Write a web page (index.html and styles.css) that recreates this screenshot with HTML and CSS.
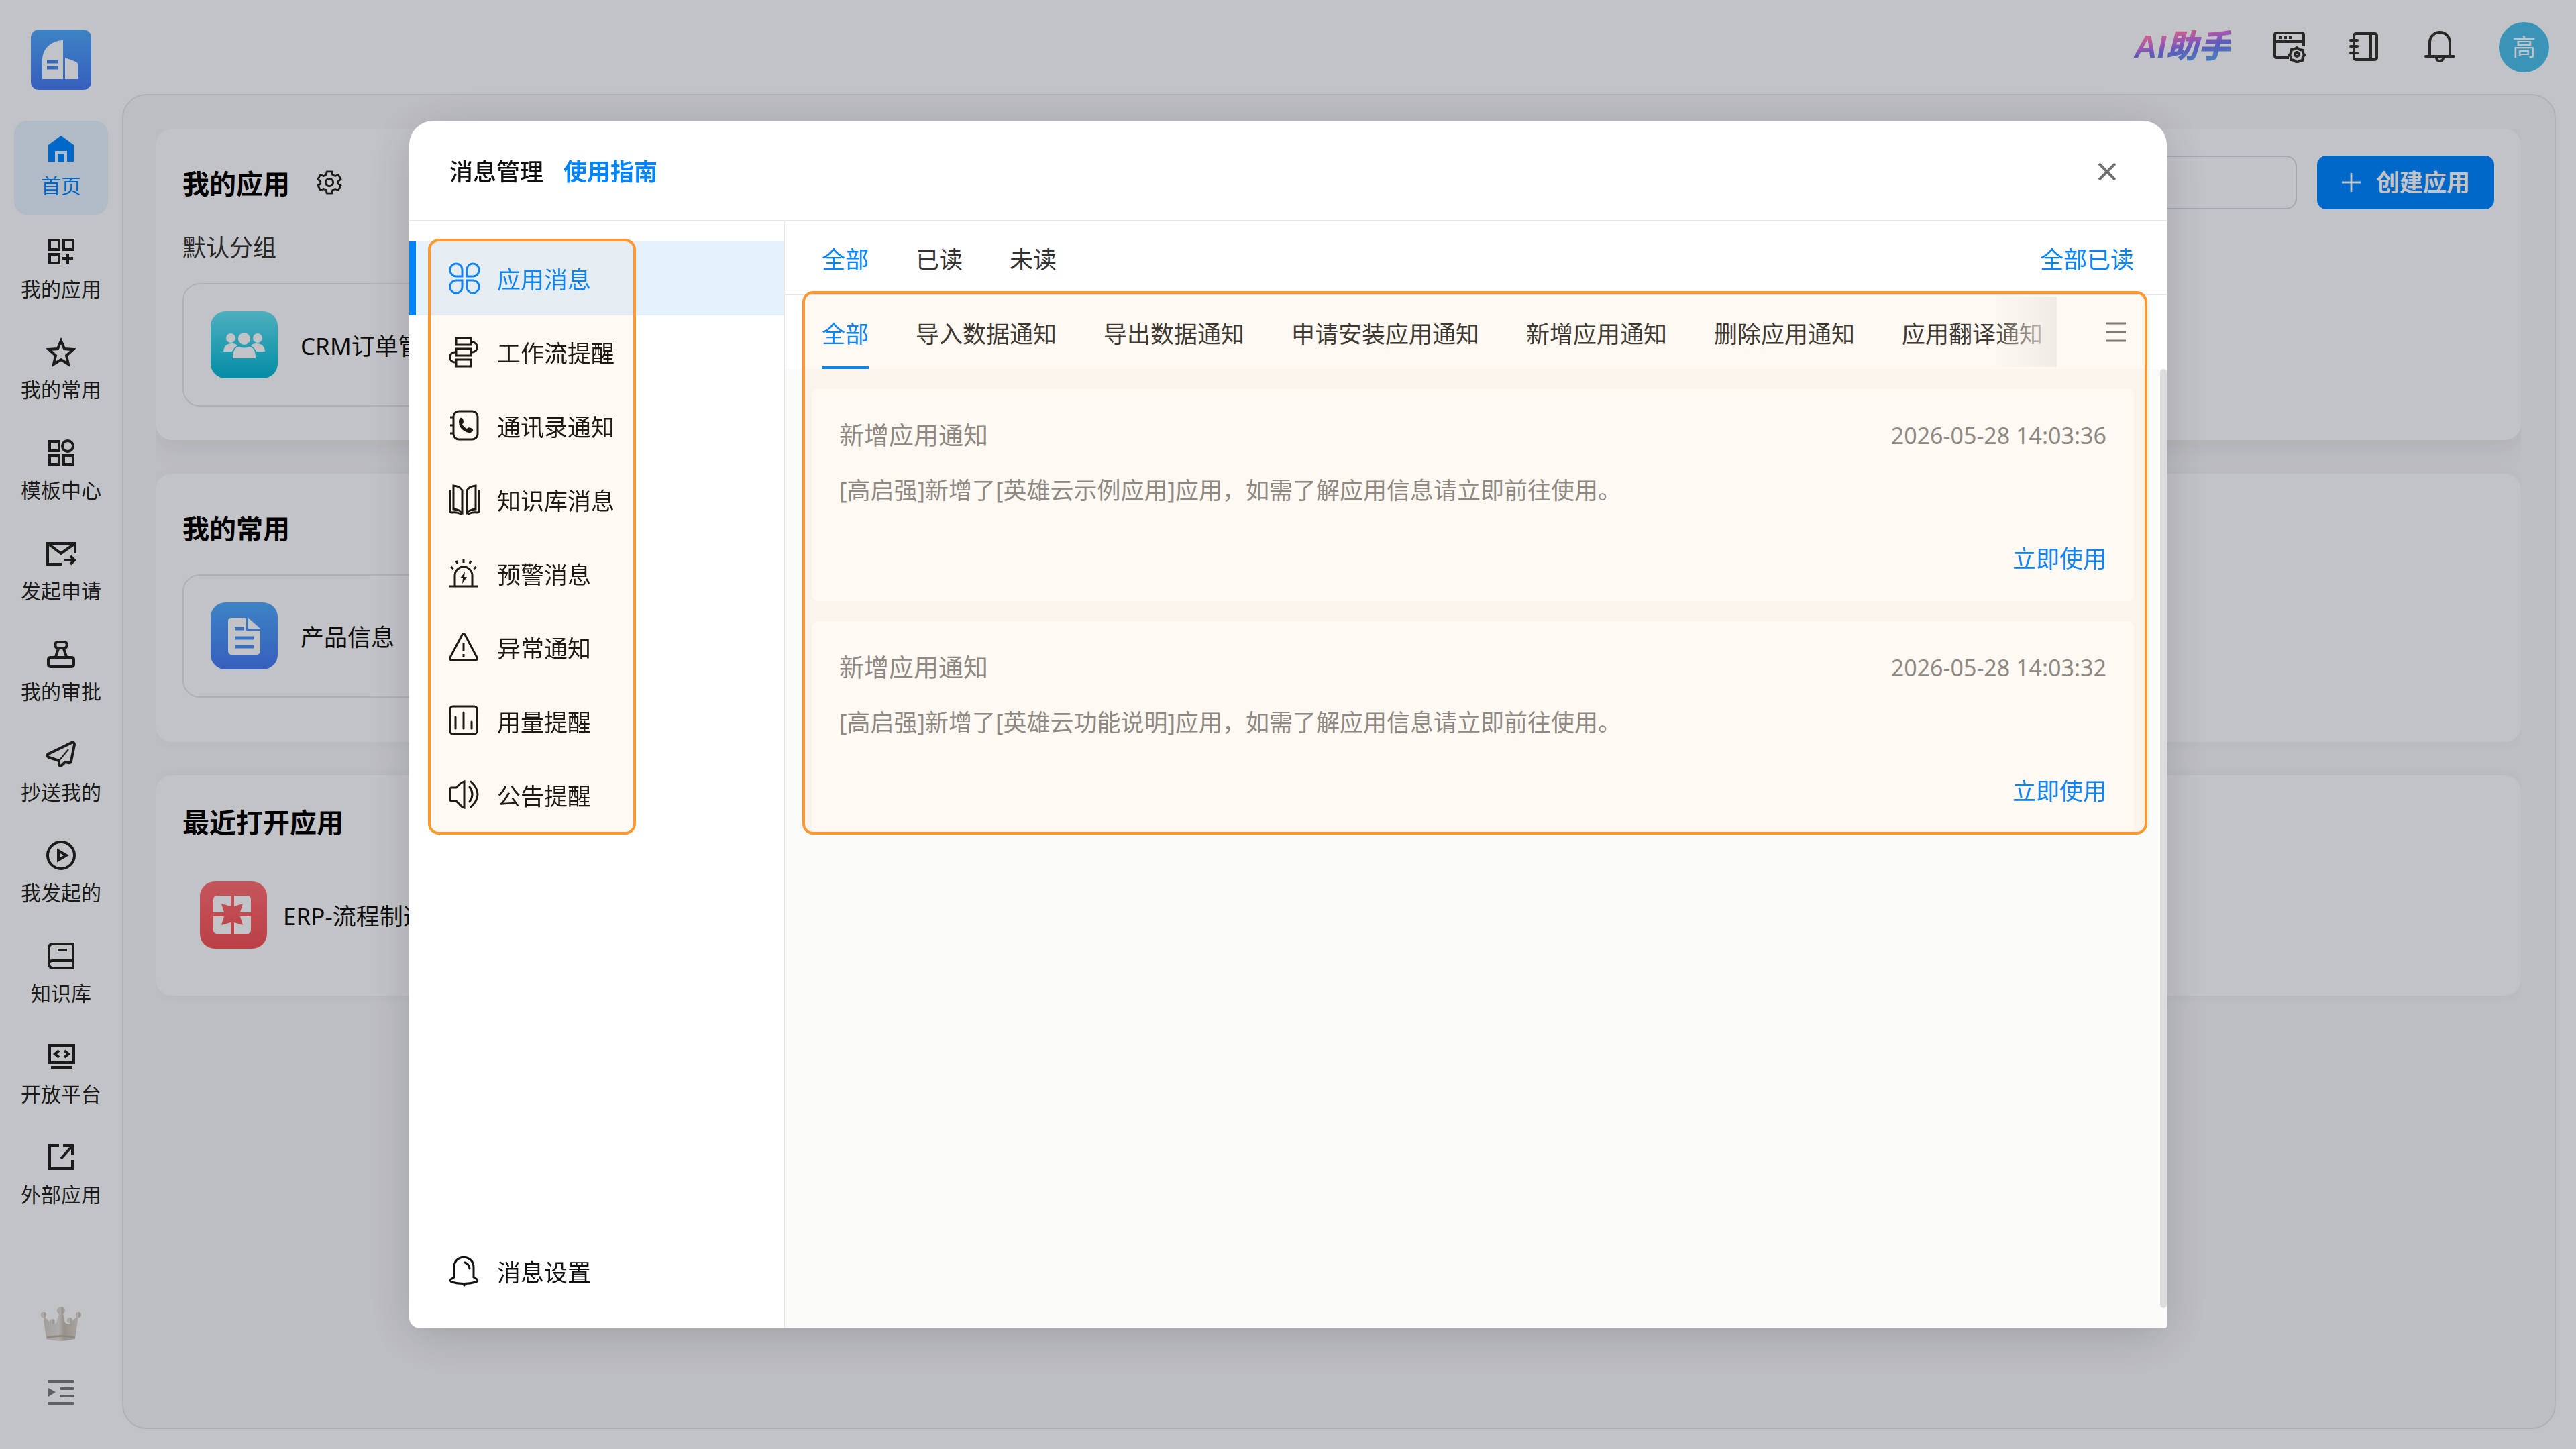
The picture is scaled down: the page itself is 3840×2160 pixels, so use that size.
FILE: index.html
```html
<!DOCTYPE html>
<html lang="zh-CN">
<head>
    <meta charset="UTF-8">
    <meta name="viewport" content="width=device-width, initial-scale=1.0">
    <title>消息管理</title>
    <link rel="stylesheet" href="styles.css">
</head>
<body>
    <div class="app">
        <aside class="sidebar">
            <a href="#" class="logo" aria-label="首页">
                <svg viewBox="0 0 90 90">
                    <defs>
                        <linearGradient id="blueGrad" x1="0" y1="0" x2="0" y2="1">
                            <stop offset="0" stop-color="#4ca4f6"/>
                            <stop offset="1" stop-color="#4577ec"/>
                        </linearGradient>
                    </defs>
                    <rect width="90" height="90" rx="12" fill="url(#blueGrad)"/>
                    <path d="M17 74V46C17 28 30 17 48 16v58z" fill="#f3f4f9"/>
                    <path d="M51 74V42l16 6q3 1 3 4v22z" fill="#f3f4f9"/>
                    <path d="M24 48h17M24 57h17" stroke="#4583ef" stroke-width="5"/>
                </svg>
            </a>
            <nav class="nav">
                <a href="#" class="nav-item active">
                    <svg class="icon" viewBox="0 0 48 48"><path d="M24 1L43 15v25H33V24H15v16H5V15z" fill="currentColor" stroke="none"/><path d="M19 28h10v12H19z" fill="currentColor" stroke="none"/></svg>
                    <span>首页</span>
                </a>
                <a href="#" class="nav-item">
                    <svg class="icon" viewBox="0 0 48 48"><path d="M7 7h14v14H7zM28 7h14v14H28zM7 28h14v13H7zM34 27v15M26 34h16"/></svg>
                    <span>我的应用</span>
                </a>
                <a href="#" class="nav-item">
                    <svg class="icon" viewBox="0 0 48 48"><path d="M24 7l5 12 13 1-10 9 3 13-11-7-11 7 3-13-10-9 13-1z"/></svg>
                    <span>我的常用</span>
                </a>
                <a href="#" class="nav-item">
                    <svg class="icon" viewBox="0 0 48 48"><path d="M7 7h14v14H7zM7 28h14v13H7zM28 28h14v13H28z"/><circle cx="34" cy="14" r="8"/></svg>
                    <span>模板中心</span>
                </a>
                <a href="#" class="nav-item">
                    <svg class="icon" viewBox="0 0 48 48"><path d="M25 40H4V9h41v15M4 9l20 15L45 9M29 34h15M38 28l6 6-6 6"/></svg>
                    <span>发起申请</span>
                </a>
                <a href="#" class="nav-item">
                    <svg class="icon" viewBox="0 0 48 48"><rect x="5" y="29" width="38" height="14" rx="3"/><path d="M16 28l4-12M32 28l-4-12M18 15a5 5 0 0 1 0-9h12a5 5 0 0 1 0 9z"/></svg>
                    <span>我的审批</span>
                </a>
                <a href="#" class="nav-item">
                    <svg class="icon" viewBox="0 0 48 48"><path d="M4 24q-1 3 2 4l15 5v5q1 5 5 1l4-4 5 1q3 1 4-2l5-25q0-4-4-3L7 22q-3 1-3 2z"/><path d="M21 33l14-17" stroke-width="2"/></svg>
                    <span>抄送我的</span>
                </a>
                <a href="#" class="nav-item">
                    <svg class="icon" viewBox="0 0 48 48"><circle cx="24" cy="24" r="20"/><path d="M20 17v14l12-7z"/></svg>
                    <span>我发起的</span>
                </a>
                <a href="#" class="nav-item">
                    <svg class="icon" viewBox="0 0 48 48"><path d="M42 31H11q-5 0-5 5t5 6h31V6H12q-6 0-6 6v24M19 15h14"/></svg>
                    <span>知识库</span>
                </a>
                <a href="#" class="nav-item">
                    <svg class="icon" viewBox="0 0 48 48"><path d="M7 7h36v26H7zM9 40h32M21 15l-6 5 6 5M29 15l6 5-6 5"/></svg>
                    <span>开放平台</span>
                </a>
                <a href="#" class="nav-item">
                    <svg class="icon" viewBox="0 0 48 48"><path d="M21 7H7v34h34V28M27 7h14v14M41 7L24 26"/></svg>
                    <span>外部应用</span>
                </a>
            </nav>
            <div class="sidebar-foot">
                <button class="icon-btn crown" aria-label="会员">
                    <svg viewBox="0 0 62 56">
                        <defs>
                            <linearGradient id="crownGrad" x1="0" y1="0" x2="1" y2="0">
                                <stop offset="0" stop-color="#cbc5c0"/>
                                <stop offset="0.45" stop-color="#d9d7d6"/>
                                <stop offset="0.6" stop-color="#bfb6ae"/>
                                <stop offset="1" stop-color="#d2cdc8"/>
                            </linearGradient>
                        </defs>
                        <g fill="url(#crownGrad)">
                            <path d="M4 14l14 14 6-2 5-18h4l4 18 6 2 14-14-5 36q-22 6-43 0z"/>
                            <circle cx="5" cy="14" r="4"/>
                            <circle cx="31" cy="8" r="6"/>
                            <circle cx="57" cy="14" r="4"/>
                            <circle cx="18" cy="24" r="4"/>
                            <circle cx="44" cy="22" r="4"/>
                        </g>
                        <path d="M10 48q21-5 42 0" fill="none" stroke="#b3aaa3" stroke-width="3"/>
                    </svg>
                </button>
                <button class="icon-btn collapse" aria-label="收起菜单">
                    <svg class="icon" viewBox="0 0 48 48"><path d="M6 7h36M24 18h18M24 29h18M6 40h36" stroke-linecap="round"/><path d="M5 17l11 6-11 7z" fill="currentColor" stroke="none"/></svg>
                </button>
            </div>
        </aside>

        <div class="main">
            <header class="topbar">
                <a href="#" class="ai">AI助手</a>
                <button class="icon-btn" aria-label="工作台设置">
                    <svg class="icon" viewBox="0 0 48 48"><path d="M23 40H5q-3 0-3-3V6q0-3 3-3h37q3 0 3 3v17M2 16h43"/><path d="M8 10h4M16 10h4M23 10h4"/><path d="M35 25l4 3 5 1v4l2 3-2 3-1 5-4 1-4 2-4-3-5-1v-4l-2-3 2-3 1-5 5-1z"/><circle cx="35" cy="35" r="3"/></svg>
                </button>
                <button class="icon-btn" aria-label="通讯录">
                    <svg class="icon" viewBox="0 0 48 48"><rect x="8" y="4" width="34" height="39" rx="3"/><path d="M33 4v39"/><path d="M3 14h10M3 23h10M3 33h10" stroke-linecap="round"/></svg>
                </button>
                <button class="icon-btn" aria-label="消息">
                    <svg class="icon" viewBox="0 0 48 48"><path d="M3 38h42M9 38V17a15 15 0 0 1 30 0v21M19 40a5 5 0 0 0 10 0" stroke-linecap="round"/></svg>
                </button>
                <button class="avatar">高</button>
            </header>

            <main class="panel">
                <div class="panel-body">
                    <section class="card card-apps">
                        <div class="card-head">
                            <h2>我的应用</h2>
                            <button class="icon-btn gear" aria-label="设置">
                                <svg viewBox="0 0 40 40"><path d="M16 3h8l1 5 4 2 5-2 4 7-4 3v4l4 3-4 7-5-2-4 2-1 5h-8l-1-5-4-2-5 2-4-7 4-3v-4l-4-3 4-7 5 2 4-2z"/><circle cx="20" cy="20" r="6"/></svg>
                            </button>
                            <input type="text" class="search" aria-label="搜索应用">
                            <button class="create">
                                <svg viewBox="0 0 32 32"><path d="M16 1v30M1 16h30"/></svg>
                                创建应用
                            </button>
                        </div>
                        <div class="group">默认分组</div>
                        <a href="#" class="app-item">
                            <svg class="app-icon" viewBox="0 0 100 100">
                                <defs>
                                    <linearGradient id="tealGrad" x1="0" y1="0" x2="0" y2="1">
                                        <stop offset="0" stop-color="#60dbee"/>
                                        <stop offset="1" stop-color="#04b0cf"/>
                                    </linearGradient>
                                </defs>
                                <rect width="100" height="100" rx="22" fill="url(#tealGrad)"/>
                                <g fill="#f3f4f9">
                                    <circle cx="50" cy="41" r="9"/>
                                    <circle cx="30" cy="40" r="7"/>
                                    <circle cx="70" cy="40" r="7"/>
                                    <path d="M19 60q1-12 13-12 5 0 8 3-6 4-8 9zM81 60q-1-12-13-12-5 0-8 3 6 4 8 9z"/>
                                    <path d="M33 70q0-17 10-17 7 3 14 0 10 0 10 17z"/>
                                </g>
                            </svg>
                            <span>CRM订单管理</span>
                        </a>
                    </section>

                    <section class="card card-common">
                        <h2>我的常用</h2>
                        <a href="#" class="app-item">
                            <svg class="app-icon" viewBox="0 0 100 100">
                                <rect width="100" height="100" rx="22" fill="url(#blueGrad)"/>
                                <path d="M31 23h22v19h21v30q0 6-6 6H32q-6 0-6-6V28q0-5 5-5z" fill="#f3f4f9"/>
                                <path d="M56 23l18 16H56z" fill="#f3f4f9"/>
                                <path d="M36 39h14M36 53h28M36 66h28" stroke="#478cf1" stroke-width="5"/>
                            </svg>
                            <span>产品信息</span>
                        </a>
                    </section>

                    <section class="card card-recent">
                        <h2>最近打开应用</h2>
                        <a href="#" class="recent-item">
                            <svg class="app-icon" viewBox="0 0 100 100">
                                <defs>
                                    <linearGradient id="redGrad" x1="0" y1="0" x2="0" y2="1">
                                        <stop offset="0" stop-color="#f56b74"/>
                                        <stop offset="1" stop-color="#eb5056"/>
                                    </linearGradient>
                                </defs>
                                <rect width="100" height="100" rx="22" fill="url(#redGrad)"/>
                                <path d="M26 21h20v16l-14-4 4 13H20V27q0-6 6-6zM51 21h19q6 0 6 6v19H60l4-13-13 4zM20 52h16l-4 13 14-4v17H26q-6 0-6-6zM60 52h16v20q0 6-6 6H51V61l13 4z" fill="#f3f4f9"/>
                            </svg>
                            <span>ERP-流程制造</span>
                        </a>
                    </section>
                </div>
            </main>
        </div>
    </div>

    <div class="overlay">
        <div class="modal" role="dialog" aria-labelledby="modalTitle">
            <div class="modal-head">
                <h1 id="modalTitle">消息管理</h1>
                <a href="#" class="guide">使用指南</a>
                <button class="icon-btn close" aria-label="关闭">
                    <svg viewBox="0 0 30 30"><path d="M3 3l24 24M27 3L3 27"/></svg>
                </button>
            </div>
            <div class="modal-body">
                <div class="menu">
                    <div class="menu-list marked">
                        <button class="menu-item active">
                            <svg class="icon" viewBox="0 0 48 48"><path d="M20 21H11A9 9 0 0 1 2 12v-1a9 9 0 0 1 18 0zM27 21h9a9 9 0 0 0 9-9v-1a9 9 0 0 0-18 0zM20 27H11a9 9 0 0 0-9 9v1a9 9 0 0 0 18 0zM27 27h9a9 9 0 0 1 9 9v1a9 9 0 0 1-18 0z"/></svg>
                            <span>应用消息</span>
                        </button>
                        <button class="menu-item">
                            <svg class="icon" viewBox="0 0 48 48"><path d="M11 3h22v10H11zM11 19h22v10H11zM11 35h22v10H11zM33 9h2a7 7 0 0 1 0 15h-2M11 24H9a7 7 0 0 0 0 15h2"/></svg>
                            <span>工作流提醒</span>
                        </button>
                        <button class="menu-item">
                            <svg class="icon" viewBox="0 0 48 48"><rect x="7" y="2" width="36" height="42" rx="8"/><path d="M2 11h6M2 23h6M2 35h6"/><path d="M17 12q4-1 5 5 0 3-2 4 2 5 7 7 2-3 6-1 4 2 3 4-3 5-10 2Q15 28 15 18q0-4 2-6z" fill="currentColor" stroke="none"/></svg>
                            <span>通讯录通知</span>
                        </button>
                        <button class="menu-item">
                            <svg class="icon" viewBox="0 0 48 48"><path d="M7 3q10 1 13 7v33q-4-4-13-5zM40 3q-10 1-13 7v33q4-4 13-5zM2 9v31q0 3 3 3 9-1 14 3M45 9v31q0 3-3 3-9-1-14 3"/></svg>
                            <span>知识库消息</span>
                        </button>
                        <button class="menu-item">
                            <svg class="icon" viewBox="0 0 48 48"><path d="M1 43h42M9 43V27a13 13 0 0 1 26 0v16M22 2v6M11 5l2 4M33 5l-2 4M3 14l4 3M41 14l-4 3"/><path d="M24 21l-7 10h4l-1 8 7-10h-4z" fill="currentColor" stroke="none"/></svg>
                            <span>预警消息</span>
                        </button>
                        <button class="menu-item">
                            <svg class="icon" viewBox="0 0 48 48"><path d="M20 5q2-3 4 0l18 34q1 4-2 4H4q-3 0-2-4zM22 17v13M22 34v4"/></svg>
                            <span>异常通知</span>
                        </button>
                        <button class="menu-item">
                            <svg class="icon" viewBox="0 0 48 48"><rect x="2" y="2" width="40" height="41" rx="4"/><path d="M10 18v17M22 11v24M34 25v10" stroke-linecap="round"/></svg>
                            <span>用量提醒</span>
                        </button>
                        <button class="menu-item">
                            <svg class="icon" viewBox="0 0 48 48"><path d="M23 4v39q-4-1-7-5l-5-5H4q-2 0-2-3V16q0-3 2-3h7l5-5q3-3 7-4z"/><path d="M31 12q8 11 0 22M33 4q20 19 0 38" stroke-linecap="round"/></svg>
                            <span>公告提醒</span>
                        </button>
                    </div>
                    <button class="menu-item settings">
                        <svg class="icon" viewBox="0 0 48 48"><path d="M22 3q15 2 15 15v15l5 3q2 2-1 4-19 5-37 0-3-2-1-4l5-3V18Q8 5 22 3z"/><path d="M24 11q6 2 7 9" stroke-linecap="round"/><path d="M19 43h8l-4 4z" fill="currentColor" stroke="none"/></svg>
                        <span>消息设置</span>
                    </button>
                </div>

                <div class="content">
                    <div class="status-bar">
                        <div class="tabs">
                            <button class="tab active">全部</button>
                            <button class="tab">已读</button>
                            <button class="tab">未读</button>
                        </div>
                        <button class="link">全部已读</button>
                    </div>
                    <div class="marked">
                        <div class="type-bar">
                            <div class="tabs type-tabs">
                                <button class="tab active">全部</button>
                                <button class="tab">导入数据通知</button>
                                <button class="tab">导出数据通知</button>
                                <button class="tab">申请安装应用通知</button>
                                <button class="tab">新增应用通知</button>
                                <button class="tab">删除应用通知</button>
                                <button class="tab">应用翻译通知</button>
                            </div>
                            <button class="icon-btn more" aria-label="更多分类">
                                <svg viewBox="0 0 30 32"><path d="M0 3h30M0 16h30M0 29h30"/></svg>
                            </button>
                        </div>
                        <div class="messages">
                            <article class="message">
                                <div class="message-head">
                                    <h3>新增应用通知</h3>
                                    <time>2026-05-28 14:03:36</time>
                                </div>
                                <p>[高启强]新增了[英雄云示例应用]应用，如需了解应用信息请立即前往使用。</p>
                                <a href="#" class="link">立即使用</a>
                            </article>
                            <article class="message">
                                <div class="message-head">
                                    <h3>新增应用通知</h3>
                                    <time>2026-05-28 14:03:32</time>
                                </div>
                                <p>[高启强]新增了[英雄云功能说明]应用，如需了解应用信息请立即前往使用。</p>
                                <a href="#" class="link">立即使用</a>
                            </article>
                        </div>
                    </div>
                    <div class="scroll-thumb"></div>
                </div>
            </div>
        </div>
    </div>
</body>
</html>
```
FILE: styles.css
```css
* {
    box-sizing: border-box;
}

body {
    margin: 0;
    height: 100vh;
    overflow: hidden;
    background: #f3f4f9;
    color: #111;
    font-family: "Noto Sans", "Noto Sans CJK SC", sans-serif;
    font-size: 35px;
    line-height: 50px;
}

h1, h2, h3, p {
    margin: 0;
}

a {
    color: inherit;
    text-decoration: none;
}

button, input {
    font: inherit;
    color: inherit;
    border: none;
    background: none;
    padding: 0;
}

button {
    cursor: pointer;
}

svg {
    display: block;
    flex-shrink: 0;
    fill: none;
    stroke: none;
}

.icon {
    width: 48px;
    height: 48px;
    stroke: currentColor;
    stroke-width: 4;
}

/* App shell */
.app {
    display: flex;
    height: 100vh;
}

.sidebar {
    width: 182px;
    flex-shrink: 0;
    display: flex;
    flex-direction: column;
    align-items: center;
    padding: 44px 20px 60px;
}

.logo svg {
    width: 90px;
    height: 90px;
}

.nav {
    display: flex;
    flex-direction: column;
    gap: 10px;
    margin-top: 46px;
}

.nav-item {
    width: 140px;
    height: 140px;
    padding-top: 21px;
    display: flex;
    flex-direction: column;
    align-items: center;
    gap: 12px;
    border-radius: 20px;
    font-size: 30px;
    line-height: 40px;
    color: #222;
}

.nav-item.active {
    gap: 8px;
    background: #dceaf8;
    color: #0082fa;
}

.sidebar-foot {
    margin-top: auto;
    display: flex;
    flex-direction: column;
    align-items: center;
    gap: 50px;
}

.crown svg {
    width: 62px;
    height: 56px;
}

.collapse {
    color: #77787c;
}

.main {
    flex: 1;
    min-width: 0;
    display: flex;
    flex-direction: column;
    padding: 0 30px 30px 0;
}

.topbar {
    height: 140px;
    flex-shrink: 0;
    display: flex;
    align-items: center;
    justify-content: flex-end;
    gap: 64px;
    padding-right: 10px;
    color: #333;
}

.ai {
    font-family: "Liberation Sans", "Noto Sans CJK SC", sans-serif;
    font-size: 48px;
    font-weight: 900;
    font-style: italic;
    background: linear-gradient(170deg, #f977b4 20%, #c46ce0 38%, #7272ea 55%, #5c9fee 85%);
    -webkit-background-clip: text;
    background-clip: text;
    color: transparent;
}

.avatar {
    width: 75px;
    height: 75px;
    border-radius: 50%;
    background: #48b9e7;
    color: #f3f4f9;
}

.panel {
    flex: 1;
    min-height: 0;
    padding: 50px 50px 50px 48px;
    border: 2px solid #dcdde2;
    border-radius: 36px;
    background: #edeef3;
}

.panel-body {
    height: 100%;
    overflow: hidden;
    display: flex;
    flex-direction: column;
    gap: 50px;
}

.card {
    padding: 0 40px;
    border-radius: 24px;
    background: #f3f4f9;
    box-shadow: 0 0 20px rgba(60, 60, 40, 0.05);
}

.card h2 {
    font-size: 40px;
    line-height: 60px;
    color: #000;
}

.card-apps {
    padding-top: 40px;
    padding-bottom: 50px;
    box-shadow: 0 10px 40px rgba(60, 60, 40, 0.09);
}

.card-common {
    padding-top: 52px;
    padding-bottom: 66px;
}

.card-recent {
    padding-top: 40px;
    padding-bottom: 70px;
}

.card-head {
    display: flex;
    align-items: center;
    height: 80px;
}

.card-head h2 {
    padding-top: 4px;
}

.gear {
    margin-left: 40px;
}

.gear svg {
    width: 38px;
    height: 38px;
    stroke: #222;
    stroke-width: 3;
    stroke-linejoin: round;
}

.search {
    width: 500px;
    height: 80px;
    margin-left: auto;
    padding: 0 24px;
    border: 2px solid #ccd2dc;
    border-radius: 16px;
}

.create {
    display: flex;
    align-items: center;
    justify-content: center;
    gap: 22px;
    width: 264px;
    height: 80px;
    margin-left: 30px;
    border-radius: 14px;
    background: #0082fa;
    color: #f3f4f9;
    font-weight: bold;
}

.create svg {
    width: 30px;
    height: 30px;
    stroke: currentColor;
    stroke-width: 3;
}

.group {
    margin: 32px 0 28px;
    color: #333;
}

.app-item {
    display: flex;
    align-items: center;
    gap: 34px;
    width: 600px;
    height: 184px;
    padding: 0 40px;
    border: 2px solid #dcdde2;
    border-radius: 26px;
}

.app-item span, .recent-item span, .menu-item span {
    padding-top: 4px;
}

.card-common .app-item {
    margin-top: 38px;
}

.recent-item {
    display: flex;
    align-items: center;
    gap: 24px;
    margin-top: 58px;
    padding-left: 26px;
}

.app-icon {
    width: 100px;
    height: 100px;
}

/* Message dialog */
.overlay {
    position: fixed;
    inset: 0;
    display: flex;
    padding: 180px 610px;
    background: rgba(0, 0, 0, 0.2);
}

.modal {
    flex: 1;
    min-width: 0;
    display: flex;
    flex-direction: column;
    overflow: hidden;
    border-radius: 36px 36px 4px 16px;
    background: #fff;
    box-shadow: 0 12px 70px rgba(0, 0, 0, 0.16);
}

.modal-head {
    display: flex;
    align-items: center;
    gap: 30px;
    height: 150px;
    flex-shrink: 0;
    padding: 4px 60px 0;
    border-bottom: 2px solid #e6e6e6;
}

.modal-head h1 {
    font-size: 35px;
    font-weight: 500;
}

.guide {
    color: #0084ff;
    font-weight: bold;
}

.close {
    margin-left: auto;
    padding-right: 14px;
}

.close svg {
    width: 30px;
    height: 30px;
    stroke: #737373;
    stroke-width: 4;
}

.modal-body {
    flex: 1;
    min-height: 0;
    display: flex;
}

.menu {
    width: 560px;
    flex-shrink: 0;
    display: flex;
    flex-direction: column;
    justify-content: space-between;
    padding: 30px 0;
    border-right: 2px solid #e6e6e6;
}

/* Orange frame that lies over a group */
.marked {
    position: relative;
}

.marked::after {
    content: "";
    position: absolute;
    inset: -6px 29px -2px 26px;
    border: 4px solid #ff982e;
    border-radius: 16px;
    background: rgba(255, 152, 46, 0.06);
    pointer-events: none;
}

.menu-list.marked::after {
    inset: -4px 220px -4px 28px;
}

.menu-item {
    display: flex;
    align-items: center;
    gap: 24px;
    width: 100%;
    height: 110px;
    padding-left: 49px;
    border-left: 10px solid transparent;
}

.menu-item .icon {
    stroke-width: 3;
}

.menu-item.active {
    border-left-color: #0084ff;
    background: #e4f2fe;
    color: #0084ff;
}

.content {
    position: relative;
    flex: 1;
    min-width: 0;
    background: #fafaf8;
}

.status-bar, .type-bar {
    display: flex;
    justify-content: space-between;
    height: 110px;
    padding-left: 55px;
    background: #fff;
}

.status-bar {
    padding-right: 49px;
    border-bottom: 2px solid #e6e6e6;
}

.status-bar .link {
    padding-top: 6px;
}

.type-bar {
    padding-right: 61px;
}

.tabs {
    display: flex;
    gap: 70px;
}

.tab {
    flex-shrink: 0;
    padding-top: 10px;
    border-bottom: 4px solid transparent;
    color: #333;
}

.tab.active {
    border-bottom-color: #0084ff;
    color: #0084ff;
}

.type-tabs {
    position: relative;
    flex: 1;
    min-width: 0;
    margin-right: 73px;
    overflow: hidden;
}

.type-tabs::after {
    content: "";
    position: absolute;
    inset: 2px 0 3px auto;
    width: 100px;
    background: linear-gradient(to right, rgba(240, 240, 241, 0), rgba(240, 240, 241, 0.9));
}

.more svg {
    width: 30px;
    height: 32px;
    stroke: #777;
    stroke-width: 3;
}

.link {
    color: #0084ff;
}

.messages {
    display: flex;
    flex-direction: column;
    gap: 30px;
    padding: 30px 49px 0 40px;
}

.message {
    display: flex;
    flex-direction: column;
    padding: 44px 41px 38px;
    border-radius: 10px;
    background: #fff;
    color: #888;
}

.message-head {
    display: flex;
    justify-content: space-between;
}

.message h3 {
    font-size: 37px;
    font-weight: normal;
}

.message time {
    font-size: 34px;
}

.message p {
    margin: 32px 0 52px;
}

.message .link {
    align-self: flex-end;
}

.scroll-thumb {
    position: absolute;
    top: 220px;
    right: 0;
    bottom: 30px;
    width: 10px;
    border-radius: 5px;
    background: #dcdddf;
}
```
